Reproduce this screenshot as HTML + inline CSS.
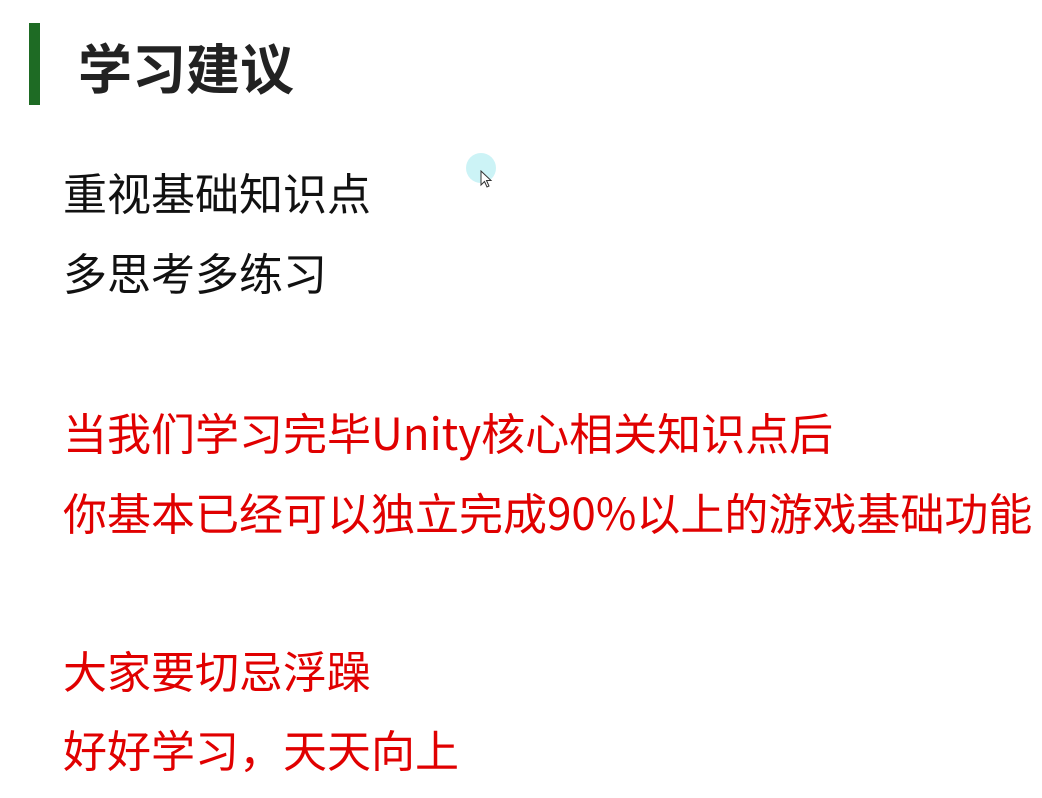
<!DOCTYPE html>
<html><head><meta charset="utf-8"><style>
html,body{margin:0;padding:0;background:#fff;width:1042px;height:798px;overflow:hidden;position:relative}
.bar{position:absolute;left:29px;top:23px;width:11px;height:82px;background:#1e6b24}
.t{position:absolute;left:78px;top:38px;font:bold 54px "Liberation Sans","Noto Sans CJK SC",sans-serif;color:#222;line-height:66px;white-space:nowrap}
.l{position:absolute;left:63px;font:400 44px "Noto Sans CJK SC","Liberation Sans",sans-serif;line-height:56px;white-space:nowrap;color:#111}
.r{color:#e00000}
.cur{position:absolute;left:466px;top:153px;width:30px;height:30px;border-radius:50%;background:rgba(170,235,240,.6)}
</style></head><body>
<div class="bar"></div>
<div class="t">学习建议</div>
<div class="cur"></div>
<svg style="position:absolute;left:480px;top:170px" width="14" height="20"><path d="M1 1 L1 15 L4.5 11.5 L7 17 L9 16 L6.5 10.5 L11 10.5 Z" fill="#fff" stroke="#333" stroke-width="1"/></svg>
<div class="l" style="top:163px">重视基础知识点</div>
<div class="l" style="top:243px">多思考多练习</div>
<div class="l r" style="top:403px">当我们学习完毕Unity核心相关知识点后</div>
<div class="l r" style="top:483px">你基本已经可以独立完成90%以上的游戏基础功能</div>
<div class="l r" style="top:641px">大家要切忌浮躁</div>
<div class="l r" style="top:720px">好好学习，天天向上</div>
</body></html>
